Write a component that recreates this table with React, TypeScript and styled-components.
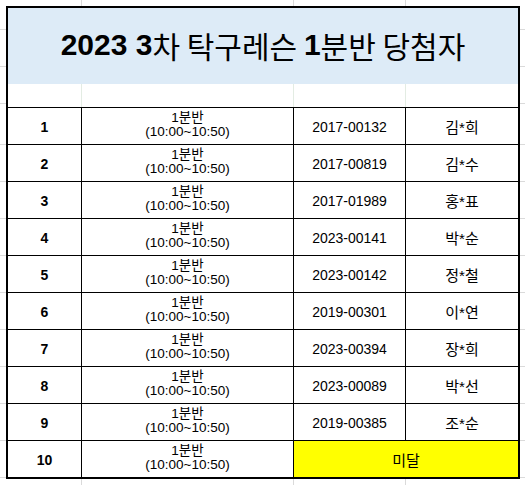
import React from 'react'
import styled, { createGlobalStyle } from 'styled-components'

const GlobalStyle = createGlobalStyle`
    html, body {
        margin: 0;
        padding: 0;
        background: #FFFFFF;
    }
    body {
        font-family: "Liberation Sans", "Noto Sans CJK KR", sans-serif;
        color: #000000;
    }
`

const winners = [
    { no: 1, id: '2017-00132', name: '김*희' },
    { no: 2, id: '2017-00819', name: '김*수' },
    { no: 3, id: '2017-01989', name: '홍*표' },
    { no: 4, id: '2023-00141', name: '박*순' },
    { no: 5, id: '2023-00142', name: '정*철' },
    { no: 6, id: '2019-00301', name: '이*연' },
    { no: 7, id: '2023-00394', name: '장*희' },
    { no: 8, id: '2023-00089', name: '박*선' },
    { no: 9, id: '2019-00385', name: '조*순' },
]

const COLS = '74px 212px 112px 112px'

const App = () => {
    return (
        <>
            <GlobalStyle />
            <Sheet>
                <Table>
                    <Header>
                        <Bold>2023 3</Bold>
                        <Light>차 탁구레슨 </Light>
                        <Bold>1</Bold>
                        <Light>분반 당첨자</Light>
                    </Header>
                    <Gap>
                        <GapCell />
                        <GapCell />
                        <GapCell />
                        <GapCell $last />
                    </Gap>
                    {winners.map((w) => (
                        <Row key={w.no}>
                            <NoCell>{w.no}</NoCell>
                            <ClassCell>
                                <Line>1분반</Line>
                                <Line>(10:00~10:50)</Line>
                            </ClassCell>
                            <Cell>{w.id}</Cell>
                            <NameCell $last>{w.name}</NameCell>
                        </Row>
                    ))}
                    <Row>
                        <NoCell>10</NoCell>
                        <ClassCell>
                            <Line>1분반</Line>
                            <Line>(10:00~10:50)</Line>
                        </ClassCell>
                        <Shortfall>미달</Shortfall>
                    </Row>
                </Table>
            </Sheet>
        </>
    )
}

const Sheet = styled.div`
    width: 525px;
    height: 485px;
    box-sizing: border-box;
    padding: 6px 0 0 6px;
    background-color: #FFFFFF;
    background-image:
        linear-gradient(to right, transparent 81px, #DADADA 81px, #DADADA 82px, transparent 82px),
        linear-gradient(to right, transparent 293px, #DADADA 293px, #DADADA 294px, transparent 294px),
        linear-gradient(to right, transparent 405px, #DADADA 405px, #DADADA 406px, transparent 406px),
        repeating-linear-gradient(to bottom, transparent 0px, transparent 36px, #DADADA 36px, #DADADA 37px);
    background-position: 0 0, 0 0, 0 0, 0 108px;
    overflow: hidden;
`

const Table = styled.div`
    width: 514px;
    box-sizing: border-box;
    border: 2px solid #000000;
    background: #FFFFFF;
    display: flex;
    flex-direction: column;
`

const Header = styled.div`
    height: 76px;
    background: #DDEBF7;
    display: flex;
    align-items: center;
    justify-content: center;
    font-size: 30px;
    white-space: pre;
    padding-bottom: 2px;
    box-sizing: border-box;
`

const Bold = styled.span`
    font-family: "Liberation Sans", Arial, sans-serif;
    font-weight: bold;
`

const Light = styled.span`
    font-family: "Noto Sans CJK KR", sans-serif;
    font-weight: normal;
`

const Gap = styled.div`
    height: 23px;
    display: grid;
    grid-template-columns: ${COLS};
`

const GapCell = styled.div<{ $last?: boolean }>`
    border-right: ${(p) => (p.$last ? 'none' : '1px solid #E3ECE3')};
`

const Row = styled.div`
    height: 37px;
    box-sizing: border-box;
    border-top: 1px solid #000000;
    display: grid;
    grid-template-columns: ${COLS};
`

const Cell = styled.div<{ $last?: boolean }>`
    display: flex;
    align-items: center;
    justify-content: center;
    font-size: 14px;
    border-right: ${(p) => (p.$last ? 'none' : '1px solid #000000')};
    padding-top: 1px;
`

const NoCell = styled(Cell)`
    font-weight: bold;
`

const NameCell = styled(Cell)`
    font-size: 15px;
`

const ClassCell = styled(Cell)`
    flex-direction: column;
    padding-top: 0;
    padding-bottom: 3px;
`

const Line = styled.span`
    display: block;
    line-height: 14px;
    font-size: 13.5px;
`

const Shortfall = styled(Cell)`
    grid-column: 3 / span 2;
    background: #FFFF00;
    border-right: none;
    font-size: 15px;
`

export default App
